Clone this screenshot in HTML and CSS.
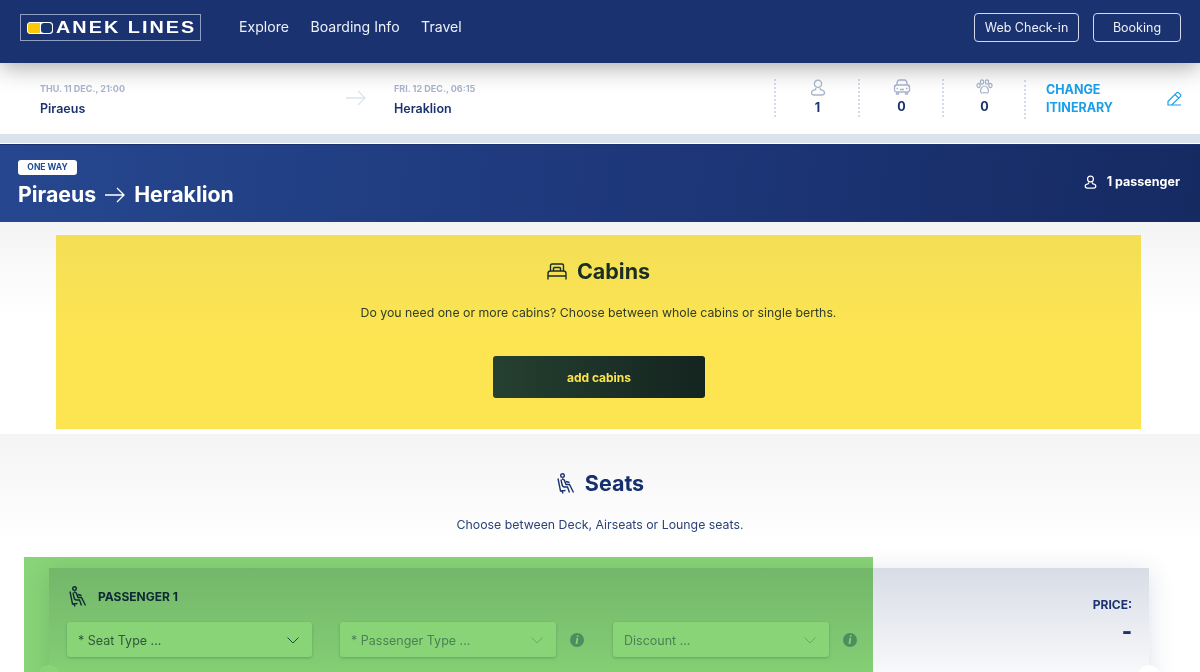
FILE: index.html
```html
<!DOCTYPE html>
<html lang="en">
<head>
    <meta charset="UTF-8">
    <meta name="viewport" content="width=device-width, initial-scale=1.0">
    <title>Anek Lines - Booking</title>
    <link rel="stylesheet" href="styles.css">
</head>
<body>
    <header class="topbar">
        <a href="#" class="logo">
            <span class="logo-pill"><span class="pill-yellow"></span><span class="pill-navy"></span></span>
            <span class="logo-text">ANEK LINES</span>
        </a>
        <nav class="nav">
            <a href="#">Explore</a>
            <a href="#">Boarding Info</a>
            <a href="#">Travel</a>
        </nav>
        <div class="top-buttons">
            <a href="#" class="outline-btn checkin">Web Check-in</a>
            <a href="#" class="outline-btn booking">Booking</a>
        </div>
    </header>

    <section class="summary">
        <div class="leg leg-from">
            <div class="leg-date">THU. 11 DEC., 21:00</div>
            <div class="leg-port">Piraeus</div>
        </div>
        <svg class="leg-arrow" width="22" height="16" viewBox="0 0 22 16" fill="none" stroke="#dbe3ef" stroke-width="1.3"><path d="M1 8h19M13 1l7 7-7 7"/></svg>
        <div class="leg leg-to">
            <div class="leg-date">FRI. 12 DEC., 06:15</div>
            <div class="leg-port">Heraklion</div>
        </div>
        <div class="count">
            <svg width="16" height="17" viewBox="0 0 16 17" fill="none" stroke="#a9b5cd" stroke-width="1.3"><circle cx="8" cy="4.800" r="3.600"/><path d="M5.800 8.800v.9c0 .6-.4 1-1 1.100C2.700 11.200 1.500 12 1.500 13.500c0 1.500 1 2.500 2.500 2.500h8c1.500 0 2.500-1 2.500-2.500 0-1.500-1.200-2.300-3.300-2.700-.6-.1-1-.5-1-1.100v-.9"/></svg>
            <b>1</b>
        </div>
        <div class="count">
            <svg width="18" height="16" viewBox="0 0 18 16" fill="none" stroke="#a9b5cd" stroke-width="1.300"><path d="M3.500 6l1-3.500C4.800 1.500 5.500 1 6.500 1h5c1 0 1.700.5 2 1.500l1 3.500"/><rect x="1.500" y="6" width="15" height="7" rx="2"/><path d="M1 7h2M15 7h2M7 10.500h4M3.500 13v2h2v-2M12.500 13v2h2v-2M3.500 9.500h1.500M13 9.500h1.500"/></svg>
            <b>0</b>
        </div>
        <div class="count">
            <svg width="17" height="16" viewBox="0 0 17 16" fill="none" stroke="#a9b5cd" stroke-width="1.200"><ellipse cx="2.600" cy="6.500" rx="1.600" ry="2.100"/><ellipse cx="6" cy="3" rx="1.600" ry="2.200"/><ellipse cx="11" cy="3" rx="1.600" ry="2.200"/><ellipse cx="14.400" cy="6.500" rx="1.600" ry="2.100"/><path d="M8.500 7C6.500 7 4.500 9.500 4.500 11.800c0 1.500 1 2.200 2 2.200.8 0 1.200-.4 2-.4s1.200.4 2 .4c1 0 2-.7 2-2.200C12.500 9.500 10.500 7 8.500 7z"/></svg>
            <b>0</b>
        </div>
        <a href="#" class="change">CHANGE<br>ITINERARY</a>
        <svg class="pencil" width="15" height="15" viewBox="0 0 15 15" fill="none" stroke="#1a9fe8" stroke-width="1.200"><path d="M1 10.500L9.800 1.700c.5-.5 1.200-.5 1.700 0l2 2c.5.500.5 1.200 0 1.700L4.700 14H1zM8 3.500l3.700 3.700M1 14h13"/></svg>
    </section>

    <div class="strip"></div>

    <section class="hero">
        <div>
            <span class="badge">ONE WAY</span>
            <h1 class="route">Piraeus
                <svg width="22" height="16" viewBox="0 0 22 16" fill="none" stroke="#fff" stroke-width="1.300"><path d="M1 8h19M13 1l7 7-7 7"/></svg>
                Heraklion</h1>
        </div>
        <div class="hero-pax">
            <svg width="13" height="14" viewBox="0 0 16 17" fill="none" stroke="#fff" stroke-width="1.500"><circle cx="8" cy="4.800" r="3.600"/><path d="M5.800 8.800v.9c0 .6-.4 1-1 1.100C2.700 11.200 1.500 12 1.500 13.500c0 1.500 1 2.500 2.500 2.500h8c1.500 0 2.500-1 2.500-2.500 0-1.500-1.200-2.300-3.300-2.700-.6-.1-1-.5-1-1.100v-.9"/></svg>
            1 passenger
        </div>
    </section>

    <section class="cabins-wrap">
        <div class="cabins">
            <h2 class="block-title">
                <svg width="20" height="17" viewBox="0 0 20 17" fill="none" stroke="#1a2e25" stroke-width="1.400"><path d="M3.500 8V2.500C3.500 1.700 4.200 1 5 1h10c.8 0 1.500.7 1.500 1.500V8M6.500 8V5.500c0-.5.5-1 1-1h5c.5 0 1 .5 1 1V8M1 16.500V10.500C1 9 2 8 3.500 8h13C18 8 19 9 19 10.500v6M1 13h18"/></svg>
                Cabins
            </h2>
            <p class="cabins-desc">Do you need one or more cabins? Choose between whole cabins or single berths.</p>
            <a href="#" class="add-btn">add cabins</a>
        </div>
    </section>

    <section class="seats">
        <h2 class="block-title seats-title">
            <svg class="seat-icon" width="19" height="21" viewBox="0 0 19 21" fill="none" stroke="#1a3270" stroke-width="1.400"><circle cx="6.500" cy="2.600" r="1.800"/><path d="M6 6c2 0 2.700 1.300 3 3l1 2.500h3.500l4 8M5 6.500l1 5c.3 1.500 1 2.500 2.500 2.500h3l2 5.500M2 5.500l2.500 12.500 5-.5M6 18l1 2.500M10 8.500l3.500 1"/></svg>
            Seats
        </h2>
        <p class="seats-desc">Choose between Deck, Airseats or Lounge seats.</p>

        <div class="pax-card">
            <div class="pax-main">
                <div class="pax-head">
                    <svg class="seat-icon" width="19" height="21" viewBox="0 0 19 21" fill="none" stroke="#1a3270" stroke-width="1.400"><circle cx="6.500" cy="2.600" r="1.800"/><path d="M6 6c2 0 2.700 1.300 3 3l1 2.500h3.500l4 8M5 6.500l1 5c.3 1.500 1 2.500 2.500 2.500h3l2 5.500M2 5.500l2.500 12.500 5-.5M6 18l1 2.500M10 8.500l3.500 1"/></svg>
                    PASSENGER 1
                </div>
                <div class="pax-fields">
                    <div class="select select-seat">
                        * Seat Type ...
                        <svg width="12" height="7" viewBox="0 0 12 7" fill="none" stroke="#3d5a80" stroke-width="1"><path d="M.5.500L6 6l5.500-5.500"/></svg>
                    </div>
                    <div class="select select-type muted">
                        * Passenger Type ...
                        <svg width="12" height="7" viewBox="0 0 12 7" fill="none" stroke="#c0cadb" stroke-width="1"><path d="M.5.500L6 6l5.500-5.500"/></svg>
                    </div>
                    <span class="info">i</span>
                    <div class="select select-discount muted">
                        Discount ...
                        <svg width="12" height="7" viewBox="0 0 12 7" fill="none" stroke="#c0cadb" stroke-width="1"><path d="M.5.500L6 6l5.500-5.500"/></svg>
                    </div>
                    <span class="info">i</span>
                </div>
            </div>
            <div class="pax-price">
                <div class="price-label">PRICE:</div>
                <div class="price-value">-</div>
            </div>
            <span class="notch notch-left"></span>
            <span class="notch notch-right"></span>
            <div class="highlight"></div>
        </div>
    </section>
</body>
</html>
```
FILE: styles.css
```css
html, body {
    height: 672px;
    overflow: hidden;
}
body {
    font-family: Inter, "Noto Sans", sans-serif;
    background-color: white;
    color: #1a3270;
    margin: 0;
}
a {
    text-decoration: none;
    color: inherit;
}

/* top bar */
.topbar {
    height: 63px;
    background-color: #1a3270;
    display: flex;
    align-items: flex-start;
    padding: 14px 19px 0 20px;
    box-sizing: border-box;
    color: white;
    position: relative;
    z-index: 2;
    box-shadow: 0 4px 24px rgba(0, 0, 0, 0.35);
}
.logo {
    width: 181px;
    height: 27px;
    box-sizing: border-box;
    border: 1px solid #8f9fc4;
    display: flex;
    align-items: center;
    padding-left: 6px;
}
.logo-pill {
    display: flex;
    width: 24px;
    height: 10px;
    border-radius: 3px;
    overflow: hidden;
    border: 1px solid #fff;
    background-color: #fff;
}
.pill-yellow {
    width: 12px;
    background-color: #fbc80a;
}
.pill-navy {
    width: 11px;
    margin-left: 1px;
    background-color: #15366e;
    border-radius: 3px;
}
.logo-text {
    font-family: "Liberation Sans", Arial, sans-serif;
    font-weight: 700;
    font-size: 16.5px;
    letter-spacing: 1.7px;
    margin-left: 3px;
    transform: scaleX(1.2);
    transform-origin: left center;
    white-space: nowrap;
}
.nav {
    display: flex;
    gap: 21.5px;
    margin-left: 38px;
    font-size: 14.1px;
    line-height: 26px;
    color: #edf0f7;
}
.top-buttons {
    display: flex;
    gap: 14px;
    margin-left: auto;
    margin-top: -1px;
}
.outline-btn {
    height: 29px;
    box-sizing: border-box;
    border: 1px solid #d3d9e8;
    border-radius: 4px;
    font-size: 12.5px;
    line-height: 27px;
    text-align: center;
    color: #edf0f7;
}
.checkin { width: 105px; }
.booking { width: 88px; }

/* itinerary summary */
.summary {
    height: 71px;
    display: flex;
    align-items: center;
    background-color: white;
    box-sizing: border-box;
    position: relative;
}
.leg-from {
    margin-left: 40px;
    width: 305px;
}
.leg-to {
    margin-left: 27px;
    width: 380px;
}
.leg {
    padding-top: 2px;
}
.leg-date {
    font-size: 9px;
    font-weight: 700;
    color: #a9b5cd;
    line-height: 12px;
    margin-bottom: 6px;
}
.leg-port {
    font-size: 12.5px;
    font-weight: 600;
    line-height: 16px;
}
.leg-arrow {
    margin-top: -1px;
}
.count {
    width: 83px;
    height: 38px;
    border-left: 2px dotted #d3dcec;
    margin-right: -1px;
    margin-top: -1px;
    display: flex;
    flex-direction: column;
    align-items: center;
    font-size: 12.5px;
    line-height: 16px;
    gap: 4px;
}
.count:nth-of-type(5) {
    width: 81px;
}
.change {
    border-left: 2px dotted #d3dcec;
    padding-left: 20px;
    height: 38px;
    width: 95px;
    margin-top: 1px;
    padding-top: 1px;
    box-sizing: content-box;
    font-size: 12.5px;
    font-weight: 700;
    line-height: 18px;
    color: #1a9fe8;
}
.pencil {
    margin-left: 26px;
    margin-top: 0;
}

.strip {
    height: 9px;
    background-color: #dce2ec;
    border-bottom: 1px solid white;
}

/* route title */
.hero {
    height: 78px;
    box-sizing: border-box;
    background: linear-gradient(98deg, #26478f 0%, #1d3779 55%, #162a62 100%);
    border-top: 1px solid #1a3270;
    display: flex;
    justify-content: space-between;
    padding: 15px 20px 0 18px;
    color: white;
}
.badge {
    display: block;
    width: 59px;
    height: 15px;
    border-radius: 3px;
    background-color: white;
    color: #1c4d94;
    font-size: 8.5px;
    font-weight: 700;
    line-height: 15px;
    text-align: center;
}
.route {
    margin: 6px 0 0;
    font-size: 21.3px;
    line-height: 27px;
    font-weight: 700;
    display: flex;
    align-items: center;
    gap: 8px;
}
.hero-pax {
    display: flex;
    align-items: center;
    gap: 10px;
    height: 43px;
    font-size: 12.5px;
    font-weight: 700;
}

/* cabins */
.cabins-wrap {
    height: 212px;
    box-sizing: border-box;
    padding: 13px 59px 0 56px;
    background: linear-gradient(#f4f4f4, white 45%);
}
.cabins {
    height: 194px;
    box-sizing: border-box;
    padding-top: 22px;
    background: linear-gradient(#f3de55, #fde552 50%);
    color: #1a2e25;
    text-align: center;
}
.block-title {
    margin: 0;
    font-size: 21.5px;
    line-height: 28px;
    font-weight: 700;
    display: flex;
    justify-content: center;
    align-items: center;
    gap: 10px;
}
.cabins-desc {
    margin: 19px 0 0;
    font-size: 12.32px;
    line-height: 18px;
    color: #2f3d2a;
}
.add-btn {
    display: block;
    width: 212px;
    height: 42px;
    margin: 34px auto 0 437px;
    border-radius: 3px;
    background: linear-gradient(90deg, #254030, #14241f);
    color: #fbe44f;
    font-size: 12px;
    font-weight: 700;
    line-height: 43px;
}

/* seats */
.seats {
    height: 238px;
    box-sizing: border-box;
    padding-top: 35px;
    background: linear-gradient(#f4f4f4, white 45%);
}
.seats-title {
    color: #162f6e;
}
.seats-desc {
    margin: 19px 0 0;
    font-size: 12.32px;
    line-height: 18px;
    text-align: center;
    color: #2b4379;
}
.pax-card {
    position: relative;
    margin: 34px 51px 0 49px;
    height: 120px;
    display: flex;
    background: linear-gradient(#d8dce6, #f7f8fa 85%, white);
    box-shadow: 0 4px 24px rgba(30, 50, 100, 0.15);
}
.pax-main {
    width: 1000px;
    padding: 16px 0 0 18px;
    box-sizing: border-box;
}
.pax-head {
    display: flex;
    align-items: center;
    gap: 11px;
    height: 24px;
    padding-left: 1px;
    font-size: 12px;
    font-weight: 700;
}
.pax-fields {
    display: flex;
    align-items: center;
    margin-top: 14px;
    font-size: 12.5px;
}
.select {
    height: 35px;
    box-sizing: border-box;
    background-color: white;
    border-radius: 3px;
    box-shadow: 0 1px 3px rgba(30, 50, 100, 0.25);
    display: flex;
    align-items: center;
    justify-content: space-between;
    padding: 1px 13px 0 11px;
    color: #5a6a80;
}
.select.muted {
    color: #8c9bb5;
}
.select-seat {
    width: 245px;
    margin-right: 28px;
}
.select-type {
    width: 216px;
}
.select-discount {
    width: 216px;
    margin-left: 29px;
}
.info {
    width: 14px;
    height: 14px;
    margin-left: 14px;
    border-radius: 50%;
    background-color: #94a8d0;
    color: white;
    font-size: 10px;
    font-weight: 800;
    font-style: italic;
    line-height: 14px;
    text-align: center;
}
.pax-price {
    flex: 1;
    text-align: right;
    padding: 30px 17px 0 0;
    font-weight: 700;
}
.price-label {
    font-size: 12px;
    line-height: 14px;
}
.price-value {
    font-size: 22px;
    font-weight: 800;
    line-height: 26px;
    margin-top: 6px;
}
.notch {
    position: absolute;
    top: 97px;
    width: 22px;
    height: 22px;
    border-radius: 50%;
    background-color: white;
}
.notch-left { left: -11px; }
.notch-right { right: -11px; }

/* green element highlight laid over the card */
.highlight {
    position: absolute;
    left: -25px;
    top: -11px;
    width: 849px;
    height: 140px;
    background-color: #88d476;
    mix-blend-mode: multiply;
}
```
